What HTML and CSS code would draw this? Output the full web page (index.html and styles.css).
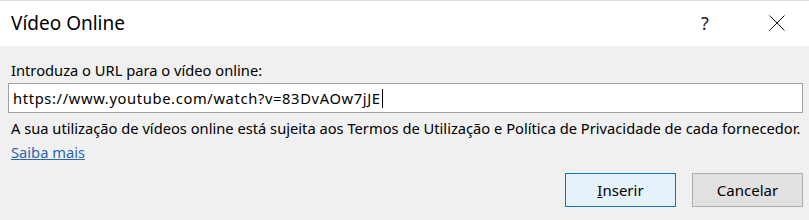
FILE: index.html
```html
<!DOCTYPE html>
<html lang="pt">
<head>
<meta charset="utf-8">
<title>Vídeo Online</title>
<link rel="stylesheet" href="styles.css">
</head>
<body>
<div class="dialog">
  <div class="topline"></div>
  <div class="titlebar">
    <div class="title">Vídeo Online</div>
    <div class="controls">
      <span class="help">?</span>
      <span class="close">
        <svg width="16" height="16" viewBox="0 0 16 16"><path d="M0.5 0.5 L15.5 15.5 M15.5 0.5 L0.5 15.5" stroke="#1a1a1a" stroke-width="1" fill="none"/></svg>
      </span>
    </div>
  </div>
  <div class="content">
    <div class="label">Introduza o URL para o vídeo online:</div>
    <div class="input"><span class="value">https://www.youtube.com/watch?v=83DvAOw7jJE</span><span class="caret"></span></div>
    <div class="info">A sua utilização de vídeos online está sujeita aos Termos de Utilização e Política de Privacidade de cada fornecedor.</div>
    <div class="linkrow"><a class="link" href="#">Saiba mais</a></div>
    <div class="buttons">
      <div class="btn primary"><span class="u">I</span>nserir</div>
      <div class="btn">Cancelar</div>
    </div>
  </div>
</div>
</body>
</html>
```
FILE: styles.css
```css
html, body {
  margin: 0;
  padding: 0;
  background: #f0f0f0;
}
.dialog {
  width: 809px;
  height: 220px;
  display: flex;
  flex-direction: column;
  font-family: "Noto Sans", "Open Sans", sans-serif;
  color: #000;
  overflow: hidden;
}
.topline {
  height: 1px;
  background: #dadada;
}
.titlebar {
  height: 45px;
  background: #fff;
  display: flex;
  align-items: center;
  justify-content: space-between;
}
.title {
  padding-left: 11px;
  font-size: 19px;
  margin-top: -2px;
}
.controls {
  display: flex;
  align-items: center;
  margin-top: -2px;
}
.help {
  font-size: 18px;
  color: #222;
  width: 20px;
  text-align: center;
  margin-right: 54px;
}
.close {
  display: flex;
  width: 16px;
  height: 16px;
  margin-right: 24px;
}
.content {
  flex: 1;
  display: flex;
  flex-direction: column;
  padding: 0 6px 0 8px;
  border-left: 1px solid #f8f8f8;
  margin-left: -1px;
  font-size: 14.7px;
}
.label {
  padding-left: 3px;
  height: 22px;
  line-height: 22px;
  margin-top: 13px;
}
.input {
  margin-top: 2px;
  height: 28px;
  border: 1px solid #a0a0a0;
  background: #fff;
  display: flex;
  align-items: center;
  padding-left: 4px;
}
.value {
  letter-spacing: 0.65px;
}
.caret {
  width: 1px;
  height: 19px;
  background: #000;
  margin-left: 1px;
}
.info {
  padding-left: 3px;
  margin-top: 4px;
  height: 22px;
  line-height: 22px;
  white-space: nowrap;
}
.linkrow {
  padding-left: 3px;
  margin-top: 2px;
  height: 22px;
  line-height: 22px;
}
.link {
  color: #2a66b0;
  text-decoration: underline;
}
.buttons {
  display: flex;
  justify-content: flex-end;
  gap: 16px;
  margin-top: 10px;
}
.btn {
  width: 109px;
  height: 32px;
  border: 1px solid #adadad;
  background: #e1e1e1;
  display: flex;
  align-items: center;
  justify-content: center;
  font-size: 15px;
}
.btn.primary {
  border-color: #0078d7;
  background: #e5f1fb;
}
.u {
  text-decoration: underline;
}
```
